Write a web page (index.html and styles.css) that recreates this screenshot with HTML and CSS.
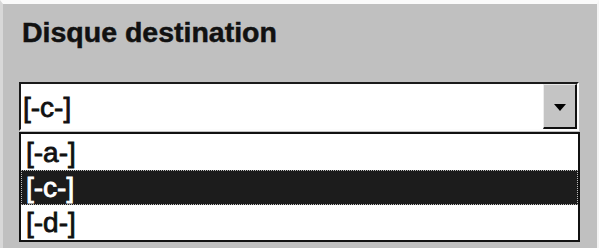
FILE: index.html
```html
<!DOCTYPE html>
<html>
<head>
<meta charset="utf-8">
<link rel="stylesheet" href="styles.css">
</head>
<body>
<div class="frame">
  <div class="title">Disque destination</div>
  <div class="combo">
    <div class="combo-text">[-c-]</div>
    <div class="combo-btn">
      <svg width="12" height="7" viewBox="0 0 12 7"><polygon points="0,0 12,0 6,7" fill="#000"/></svg>
    </div>
  </div>
  <div class="list">
    <div class="item">[-a-]</div>
    <div class="item selected">[-c-]</div>
    <div class="item">[-d-]</div>
  </div>
</div>
</body>
</html>
```

FILE: styles.css
```css
html, body {
  margin: 0;
  padding: 0;
}
body {
  width: 599px;
  height: 248px;
  background: #c0c0c0;
  overflow: hidden;
  font-family: "Liberation Sans", Arial, sans-serif;
  color: #111;
}
.frame {
  box-sizing: border-box;
  height: 248px;
  border-top: 4px solid #fafafa;
  border-left: 3px solid #d8d8d8;
  border-right: 2px solid #f4f4f4;
  padding-left: 16px;
  display: flex;
  flex-direction: column;
}
.title {
  margin-top: 11px;
  margin-left: 3px;
  font-size: 28.5px;
  font-weight: bold;
  line-height: 34px;
  height: 34px;
  -webkit-text-stroke: 0.5px #111;
}
.combo {
  margin-top: 33px;
  box-sizing: border-box;
  width: 560px;
  height: 49px;
  border-top: 2px solid #1a1a1a;
  border-left: 2px solid #1a1a1a;
  border-bottom: 2px solid #fcfcfc;
  border-right: 2px solid #fcfcfc;
  background: #fff;
  display: flex;
}
.combo-text {
  flex: 1;
  font-size: 28px;
  line-height: 45px;
  padding-left: 2px;
  padding-top: 1px;
  box-sizing: border-box;
  height: 45px;
  -webkit-text-stroke: 0.8px #111;
}
.combo-btn {
  box-sizing: border-box;
  width: 34px;
  height: 45px;
  background: #c4c4c4;
  border-top: 1px solid #e8e8e8;
  border-left: 1px solid #ececec;
  border-right: 2px solid #111;
  border-bottom: 2px solid #111;
  display: flex;
  align-items: center;
  justify-content: center;
  padding-top: 2px;
}
.list {
  margin-top: 1px;
  box-sizing: border-box;
  width: 561px;
  height: 110px;
  border: 2px solid #111;
  background: #fff;
  padding: 1px 0;
}
.item {
  height: 35px;
  line-height: 35px;
  font-size: 28px;
  padding-left: 5px;
  -webkit-text-stroke: 0.8px #111;
}
.item.selected {
  background: #1c1c1c;
  color: #fff;
  -webkit-text-stroke: 0.8px #fff;
  outline: 1px dotted #bbb;
  outline-offset: -1px;
}
```
